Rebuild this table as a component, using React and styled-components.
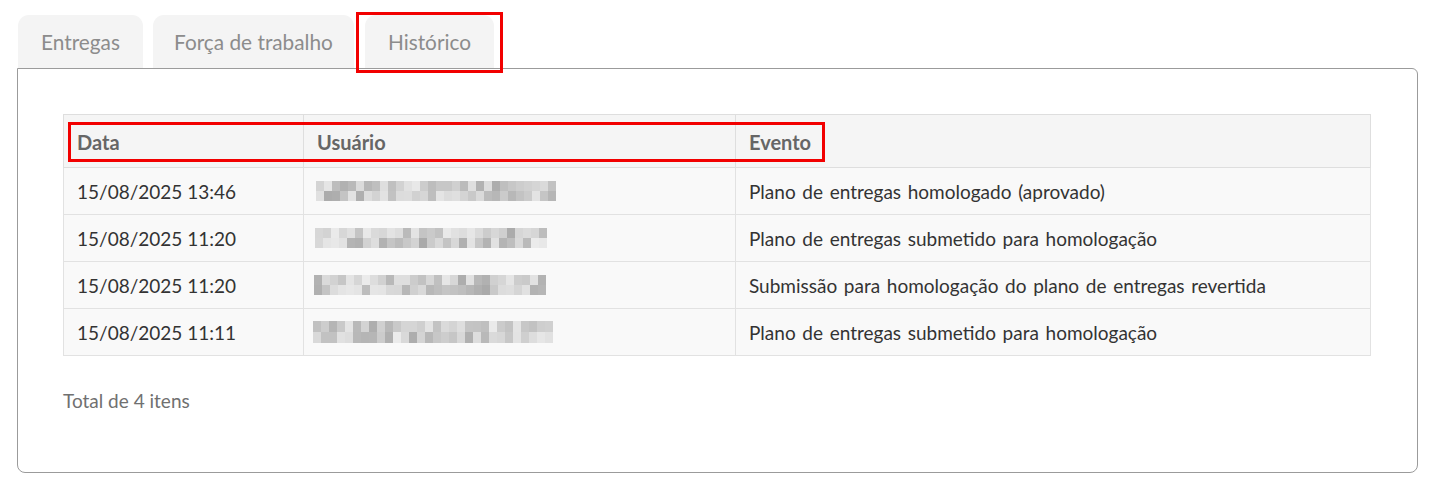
import React from "react";
import styled, { createGlobalStyle } from "styled-components";

const Global = createGlobalStyle`
  html, body { margin: 0; padding: 0; background: #fff; }
  body { font-family: Lato, "Open Sans", sans-serif; }
`;

const Page = styled.div`
  padding: 15px 19px 14px 17px;
`;

const TabBar = styled.div`
  display: flex;
  gap: 10px;
  padding-left: 1px;
  height: 53px;
  align-items: flex-end;
`;

const Tab = styled.div`
  position: relative;
  box-sizing: border-box;
  height: 53px;
  width: ${(p) => p.$w}px;
  display: flex;
  align-items: center;
  justify-content: center;
  background: #f4f4f4;
  border-radius: 11px 11px 0 0;
  color: #8c8c8c;
  font-size: 20.8px;
  white-space: nowrap;
  margin-left: ${(p) => p.$ml || 0}px;
`;

const Marker = styled.div`
  position: absolute;
  border: 3px solid #f20000;
  pointer-events: none;
  box-sizing: border-box;
`;

const TabMarker = styled(Marker)`
  left: -9px;
  top: -3px;
  width: 147px;
  height: 61px;
`;

const Panel = styled.div`
  box-sizing: border-box;
  border: 1px solid #9b9b9b;
  border-radius: 0 6px 8px 8px;
  height: 405px;
  padding: 45px 46px 0 45px;
`;

const TableWrap = styled.div`
  position: relative;
`;

const HeaderMarker = styled(Marker)`
  left: 5px;
  top: 8px;
  width: 757px;
  height: 40px;
`;

const Table = styled.table`
  width: 100%;
  border-collapse: collapse;
  font-size: 19px;
  color: #333;
`;

const Col = styled.col`
  width: ${(p) => p.$w}px;
`;

const Th = styled.th`
  text-align: left;
  font-weight: 700;
  font-size: 20px;
  color: #666;
  background: #f5f5f5;
  border: 1px solid #dedede;
  height: 53px;
  padding: 2px 13px 0;
  box-sizing: border-box;
`;

const Td = styled.td`
  background: #f9f9f9;
  border: 1px solid #e2e2e2;
  height: 47px;
  padding: 0 13px;
  box-sizing: border-box;
  vertical-align: middle;
  word-spacing: ${(p) => (p.$wide ? "1.8px" : "0")};
`;

const Footer = styled.div`
  margin-top: 33px;
  color: #707070;
  font-size: 19px;
`;

function rand(seed) {
  let s = seed;
  return () => {
    s = (s * 9301 + 49297) % 233280;
    return s / 233280;
  };
}

const BlurSvg = styled.svg`
  display: block;
  margin-left: ${(p) => p.$dx}px;
`;

function Blurred({ seed, width, height = 20, dx = 0 }) {
  const r = rand(seed);
  const bw = 8;
  const cols = Math.floor(width / bw);
  const rows = 2;
  const rh = height / rows;
  const rects = [];
  for (let y = 0; y < rows; y++) {
    for (let x = 0; x < cols; x++) {
      const v = r();
      const g = Math.round(170 + v * 65);
      rects.push(
        <rect
          key={`${x}-${y}`}
          x={x * bw}
          y={y * rh}
          width={bw}
          height={rh}
          fill={`rgb(${g},${g},${g})`}
        />
      );
    }
  }
  return (
    <BlurSvg $dx={dx} width={cols * bw} height={height} viewBox={`0 0 ${cols * bw} ${height}`}>
      {rects}
    </BlurSvg>
  );
}

const rows = [
  { date: "15/08/2025 13:46", seed: 11, w: 240, dx: -1, h: 20, ev: "Plano de entregas homologado (aprovado)" },
  { date: "15/08/2025 11:20", seed: 37, w: 234, dx: -2, h: 20, ev: "Plano de entregas submetido para homologação" },
  { date: "15/08/2025 11:20", seed: 73, w: 232, dx: -3, h: 20, ev: "Submissão para homologação do plano de entregas revertida" },
  { date: "15/08/2025 11:11", seed: 129, w: 240, dx: -4, h: 22, ev: "Plano de entregas submetido para homologação" },
];

export default function App() {
  return (
    <>
      <Global />
      <Page>
        <TabBar>
          <Tab $w={125}>Entregas</Tab>
          <Tab $w={201}>Força de trabalho</Tab>
          <Tab $w={129} $ml={1}>
            Histórico
            <TabMarker />
          </Tab>
        </TabBar>
        <Panel>
          <TableWrap>
            <Table>
              <colgroup>
                <Col $w={240} />
                <Col $w={432} />
                <col />
              </colgroup>
              <thead>
                <tr>
                  <Th>Data</Th>
                  <Th>Usuário</Th>
                  <Th>Evento</Th>
                </tr>
              </thead>
              <tbody>
                {rows.map((r, i) => (
                  <tr key={i}>
                    <Td>{r.date}</Td>
                    <Td>
                      <Blurred seed={r.seed} width={r.w} dx={r.dx} height={r.h} />
                    </Td>
                    <Td $wide>{r.ev}</Td>
                  </tr>
                ))}
              </tbody>
            </Table>
            <HeaderMarker />
          </TableWrap>
          <Footer>Total de 4 itens</Footer>
        </Panel>
      </Page>
    </>
  );
}
